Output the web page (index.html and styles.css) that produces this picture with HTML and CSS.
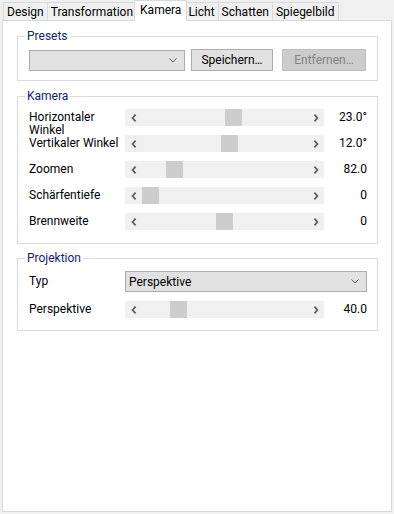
FILE: index.html
```
<!DOCTYPE html>
<html lang="de">

<head>
    <meta charset="UTF-8">
    <title>Kamera</title>
    <link rel="stylesheet" href="styles.css">
</head>

<body>
    <div class="window">
        <div class="tabs">
            <div class="tab">Design</div>
            <div class="tab">Transformation</div>
            <div class="tab active">Kamera</div>
            <div class="tab">Licht</div>
            <div class="tab">Schatten</div>
            <div class="tab">Spiegelbild</div>
        </div>

        <div class="pane">
            <!-- Presets -->
            <div class="group group-presets">
                <span class="group-title">Presets</span>
                <div class="preset-row">
                    <div class="combo preset-combo">
                        <span class="combo-text"></span>
                        <svg class="combo-arrow" width="8" height="5" viewBox="0 0 8 5"><path d="M0.5 0.5 L4 4 L7.5 0.5" /></svg>
                    </div>
                    <button class="btn btn-save">Speichern…</button>
                    <button class="btn btn-remove" disabled>Entfernen…</button>
                </div>
            </div>

            <!-- Kamera -->
            <div class="group group-camera">
                <span class="group-title">Kamera</span>
                <div class="rows">
                    <div class="row">
                        <span class="label">Horizontaler Winkel</span>
                        <div class="slider">
                            <span class="slider-btn"><svg width="6" height="8" viewBox="0 0 6 8"><path d="M4.6 0.7 L1.6 4 L4.6 7.3" /></svg></span>
                            <span class="slider-track"><span class="slider-thumb" style="margin-left: 83px"></span></span>
                            <span class="slider-btn"><svg width="6" height="8" viewBox="0 0 6 8"><path d="M1.4 0.7 L4.4 4 L1.4 7.3" /></svg></span>
                        </div>
                        <span class="value">23.0°</span>
                    </div>
                    <div class="row">
                        <span class="label">Vertikaler Winkel</span>
                        <div class="slider">
                            <span class="slider-btn"><svg width="6" height="8" viewBox="0 0 6 8"><path d="M4.6 0.7 L1.6 4 L4.6 7.3" /></svg></span>
                            <span class="slider-track"><span class="slider-thumb" style="margin-left: 79px"></span></span>
                            <span class="slider-btn"><svg width="6" height="8" viewBox="0 0 6 8"><path d="M1.4 0.7 L4.4 4 L1.4 7.3" /></svg></span>
                        </div>
                        <span class="value">12.0°</span>
                    </div>
                    <div class="row">
                        <span class="label">Zoomen</span>
                        <div class="slider">
                            <span class="slider-btn"><svg width="6" height="8" viewBox="0 0 6 8"><path d="M4.6 0.7 L1.6 4 L4.6 7.3" /></svg></span>
                            <span class="slider-track"><span class="slider-thumb" style="margin-left: 24px"></span></span>
                            <span class="slider-btn"><svg width="6" height="8" viewBox="0 0 6 8"><path d="M1.4 0.7 L4.4 4 L1.4 7.3" /></svg></span>
                        </div>
                        <span class="value">82.0</span>
                    </div>
                    <div class="row">
                        <span class="label">Schärfentiefe</span>
                        <div class="slider">
                            <span class="slider-btn"><svg width="6" height="8" viewBox="0 0 6 8"><path d="M4.6 0.7 L1.6 4 L4.6 7.3" /></svg></span>
                            <span class="slider-track"><span class="slider-thumb" style="margin-left: 0px"></span></span>
                            <span class="slider-btn"><svg width="6" height="8" viewBox="0 0 6 8"><path d="M1.4 0.7 L4.4 4 L1.4 7.3" /></svg></span>
                        </div>
                        <span class="value">0</span>
                    </div>
                    <div class="row">
                        <span class="label">Brennweite</span>
                        <div class="slider">
                            <span class="slider-btn"><svg width="6" height="8" viewBox="0 0 6 8"><path d="M4.6 0.7 L1.6 4 L4.6 7.3" /></svg></span>
                            <span class="slider-track"><span class="slider-thumb" style="margin-left: 74px"></span></span>
                            <span class="slider-btn"><svg width="6" height="8" viewBox="0 0 6 8"><path d="M1.4 0.7 L4.4 4 L1.4 7.3" /></svg></span>
                        </div>
                        <span class="value">0</span>
                    </div>
                </div>
            </div>

            <!-- Projektion -->
            <div class="group group-projection">
                <span class="group-title">Projektion</span>
                <div class="rows">
                    <div class="row row-combo">
                        <span class="label">Typ</span>
                        <div class="combo type-combo">
                            <span class="combo-text">Perspektive</span>
                            <svg class="combo-arrow" width="8" height="5" viewBox="0 0 8 5"><path d="M0.5 0.5 L4 4 L7.5 0.5" /></svg>
                        </div>
                    </div>
                    <div class="row">
                        <span class="label">Perspektive</span>
                        <div class="slider">
                            <span class="slider-btn"><svg width="6" height="8" viewBox="0 0 6 8"><path d="M4.6 0.7 L1.6 4 L4.6 7.3" /></svg></span>
                            <span class="slider-track"><span class="slider-thumb" style="margin-left: 28px"></span></span>
                            <span class="slider-btn"><svg width="6" height="8" viewBox="0 0 6 8"><path d="M1.4 0.7 L4.4 4 L1.4 7.3" /></svg></span>
                        </div>
                        <span class="value">40.0</span>
                    </div>
                </div>
            </div>
        </div>
    </div>
</body>

</html>
```

FILE: styles.css
```
/* Window */
body {
    margin: 0;
    padding: 0;
    background-color: #f0f0f0;
    font-family: Roboto, "Noto Sans", sans-serif;
    font-size: 12px;
    color: #000;
}

.window {
    width: 394px;
    height: 514px;
    display: flex;
    flex-direction: column;
}

/* Tab strip */
.tabs {
    display: flex;
    align-items: flex-start;
    height: 20px;
    padding: 2px 0 0 3px;
    box-sizing: border-box;
}

.tab {
    height: 18px;
    line-height: 18px;
    padding: 0 3px;
    margin-right: -1px;
    border: 1px solid #d9d9d9;
    border-bottom: none;
    box-sizing: border-box;
    background-color: #f0f0f0;
    white-space: nowrap;
}

.tab.active {
    position: relative;
    z-index: 1;
    height: 21px;
    margin: -2px -3px 0 -2px;
    padding: 0 5px;
    line-height: 19px;
    background-color: #fff;
}

/* Tab page */
.pane {
    flex: 1;
    margin: 0 2px 2px 2px;
    padding: 15px 13px 0 14px;
    border: 1px solid #d9d9d9;
    background-color: #fff;
}

/* Group boxes */
.group {
    border: 1px solid #dcdcdc;
    margin-bottom: 15px;
}

.group-camera {
    margin-bottom: 14px;
    padding-bottom: 13px;
}

.group-presets {
    padding-bottom: 9px;
}

.group-projection {
    padding-bottom: 12px;
}

.group-title {
    display: block;
    width: max-content;
    margin: -9px 0 0 7px;
    padding: 0 2px;
    line-height: 16px;
    background-color: #fff;
    color: #15226e;
}

/* Presets row */
.preset-row {
    display: flex;
    align-items: flex-end;
    margin-top: 5px;
    padding-left: 11px;
}

.preset-combo {
    width: 156px;
    margin-right: 6px;
}

.btn {
    height: 22px;
    padding: 0;
    border: 1px solid #adadad;
    background-color: #e1e1e1;
    font-family: inherit;
    font-size: 12px;
    color: #000;
}

.btn-save {
    width: 82px;
    margin-right: 9px;
}

.btn-remove {
    width: 84px;
    border-color: #bfbfbf;
    background-color: #cccccc;
    color: #838383;
}

/* Combo box */
.combo {
    display: flex;
    align-items: center;
    justify-content: space-between;
    height: 21px;
    padding: 0 7px 0 3px;
    border: 1px solid #adadad;
    box-sizing: border-box;
    background-color: #e1e1e1;
}

.combo-arrow path {
    fill: none;
    stroke: #606060;
    stroke-width: 1;
}

.type-combo {
    width: 242px;
}

/* Label / slider rows */
.rows {
    margin-top: 5px;
    padding: 0 10px 0 11px;
}

.row {
    display: flex;
    height: 17px;
    margin-bottom: 9px;
}

.row:last-child {
    margin-bottom: 0;
}

.row-combo {
    height: 21px;
}

.row-combo .label {
    padding-top: 4px;
}

.label {
    width: 96px;
    flex-shrink: 0;
    padding-top: 2px;
    line-height: 13px;
}

.slider {
    display: flex;
    width: 199px;
    height: 17px;
    background-color: #f0f0f0;
}

.slider-btn {
    display: flex;
    align-items: center;
    justify-content: center;
    width: 17px;
    height: 17px;
}

.slider-btn path {
    fill: none;
    stroke: #606060;
    stroke-width: 1.8;
}

.slider-track {
    flex: 1;
    display: flex;
}

.slider-thumb {
    width: 17px;
    height: 17px;
    background-color: #cdcdcd;
}

.value {
    flex: 1;
    padding-top: 2px;
    line-height: 13px;
    text-align: right;
}
```
